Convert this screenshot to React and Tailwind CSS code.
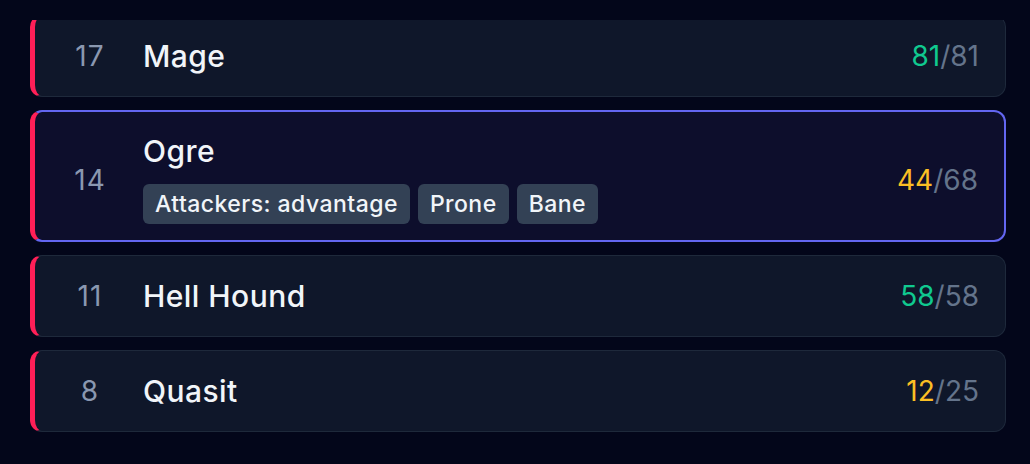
import React from "react";

const monsters = [
  { init: 17, name: "Mage", hp: 81, max: 81, tags: [] },
  { init: 14, name: "Ogre", hp: 44, max: 68, tags: ["Attackers: advantage", "Prone", "Bane"], active: true },
  { init: 11, name: "Hell Hound", hp: 58, max: 58, tags: [] },
  { init: 8, name: "Quasit", hp: 12, max: 25, tags: [] },
];

function Row({ m, first }) {
  const healthy = m.hp === m.max;
  return (
    <div
      className={`flex items-center rounded-xl border-l-[5px] border-l-[#ff1f57] pl-[31px] pr-[26px] ${
        m.active ? "border-2 border-[#6366f1] bg-[#0d0e2c]" : "border border-[#1e293b] bg-[#0f172a]"
      } ${m.tags.length ? "pt-[23px] pb-[16px]" : "py-[24px]"} ${first ? "-mt-[5px]" : ""}`}
    >
      <div className="w-12 text-center text-[28px] leading-8 tracking-[0.04em] text-[#8a98b0]">{m.init}</div>
      <div className="ml-[29px] flex flex-1 flex-col">
        <div className="text-[30px] leading-8 font-medium tracking-[0.015em] text-[#f1f5f9]">{m.name}</div>
        {m.tags.length > 0 && (
          <div className="mt-[17px] flex gap-2">
            {m.tags.map((t) => (
              <span
                key={t}
                className="h-10 rounded-md bg-[#334155] px-3 text-[23px] leading-10 font-medium tracking-[0.02em] text-[#f1f5f9]"
              >
                {t}
              </span>
            ))}
          </div>
        )}
      </div>
      <div className="text-[28px] leading-8">
        <span className={healthy ? "text-[#10c98f]" : "text-[#fbbf24]"}>{m.hp}</span>
        <span className="text-[#64748b]">/{m.max}</span>
      </div>
    </div>
  );
}

export default function App() {
  return (
    <div
      className="h-[464px] w-full bg-[#03061a] pt-5 pl-[30px] pr-[24px]"
      style={{ fontFamily: "Inter, 'Noto Sans', sans-serif" }}
    >
      <div className="flex h-[430px] flex-col gap-[13px] overflow-hidden">
        {monsters.map((m, i) => (
          <Row key={m.name} m={m} first={i === 0} />
        ))}
      </div>
    </div>
  );
}
